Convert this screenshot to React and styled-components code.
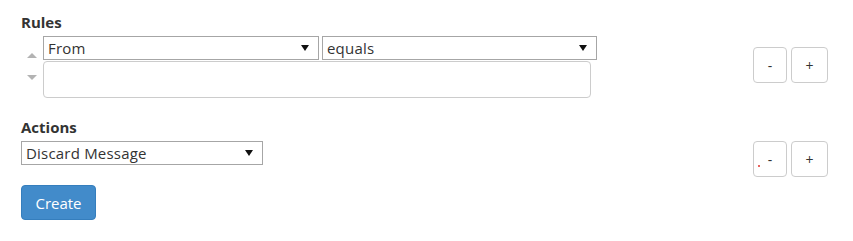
import React from "react";
import styled, { createGlobalStyle } from "styled-components";

const GlobalStyle = createGlobalStyle`
  body {
    margin: 0;
    background: #ffffff;
    font-family: "Open Sans", "Liberation Sans", sans-serif;
    color: #333333;
  }
`;

const arrow =
  "url(\"data:image/svg+xml;utf8,<svg xmlns='http://www.w3.org/2000/svg' width='8' height='6'><path d='M0 0h8L4 6z' fill='%23111'/></svg>\")";

const Page = styled.div`
  padding: 12px 25px 20px 21px;
  width: 807px;
`;

const Label = styled.div`
  font-size: 15px;
  font-weight: 700;
  line-height: 20px;
  margin-bottom: ${(p) => p.gap}px;
`;

const Row = styled.div`
  display: flex;
  align-items: flex-start;
`;

const Sorter = styled.div`
  box-sizing: border-box;
  width: 22px;
  align-self: stretch;
  display: flex;
  flex-direction: column;
  justify-content: center;
  align-items: center;
  gap: 17px;
  padding-bottom: 1px;
`;

const Tri = styled.span`
  width: 0;
  height: 0;
  border-left: 5px solid transparent;
  border-right: 5px solid transparent;
  ${(p) =>
    p.up ? "border-bottom: 5px solid #b3b3b3;" : "border-top: 5px solid #b3b3b3;"}
`;

const Fields = styled.div`
  display: flex;
  flex-direction: column;
  gap: 1px;
`;

const Selects = styled.div`
  display: flex;
  gap: 3px;
`;

const Select = styled.select`
  appearance: none;
  -webkit-appearance: none;
  box-sizing: border-box;
  width: ${(p) => p.w}px;
  height: 24px;
  margin: 0;
  padding: 0 20px 0 4px;
  border: 1px solid #a6a6a6;
  border-radius: 0;
  background: #ffffff ${arrow} no-repeat right 9px center;
  font-family: "Open Sans", "Liberation Sans", sans-serif;
  font-size: 15px;
  letter-spacing: 0.2px;
  color: #333333;
  outline: none;
`;

const TextArea = styled.textarea`
  box-sizing: border-box;
  display: block;
  width: 548px;
  height: 37px;
  margin: 0;
  border: 1px solid #cccccc;
  border-radius: 4px;
  resize: none;
  font-family: "Open Sans", "Liberation Sans", sans-serif;
  font-size: 15px;
  outline: none;
`;

const Spacer = styled.div`
  flex: 1;
`;

const Buttons = styled.div`
  display: flex;
  gap: 4px;
  margin-top: ${(p) => p.offset || 0}px;
`;

const SmallButton = styled.button`
  position: relative;
  box-sizing: border-box;
  width: ${(p) => p.w}px;
  height: 36px;
  padding: 0;
  border: 1px solid #cccccc;
  border-radius: 4px;
  background: #ffffff;
  font-family: "Open Sans", "Liberation Sans", sans-serif;
  font-size: 14px;
  color: #333333;
  cursor: pointer;
`;

const Dot = styled.span`
  position: absolute;
  left: 4px;
  top: 23px;
  width: 2px;
  height: 2px;
  border-radius: 1px;
  background: #e0302a;
`;

const Section = styled.div`
  margin-top: ${(p) => p.top || 0}px;
`;

const Create = styled.button`
  box-sizing: border-box;
  width: 75px;
  height: 35px;
  margin-top: 8px;
  border: 1px solid #357ebd;
  border-radius: 4px;
  background: #428bca;
  color: #ffffff;
  font-family: "Open Sans", "Liberation Sans", sans-serif;
  font-size: 15px;
  cursor: pointer;
`;

export default function App() {
  return (
    <Page>
      <GlobalStyle />
      <Section>
        <Label gap={4}>Rules</Label>
        <Row>
          <Sorter>
            <Tri up />
            <Tri />
          </Sorter>
          <Fields>
            <Selects>
              <Select w={276} defaultValue="from">
                <option value="from">From</option>
                <option value="to">To</option>
                <option value="subject">Subject</option>
              </Select>
              <Select w={275} defaultValue="equals">
                <option value="equals">equals</option>
                <option value="contains">contains</option>
              </Select>
            </Selects>
            <TextArea />
          </Fields>
          <Spacer />
          <Buttons offset={11}>
            <SmallButton w={34}>-</SmallButton>
            <SmallButton w={37}>+</SmallButton>
          </Buttons>
        </Row>
      </Section>
      <Section top={19}>
        <Label gap={4}>Actions</Label>
        <Row>
          <Select w={242} defaultValue="discard">
            <option value="discard">Discard Message</option>
            <option value="move">Move to Folder</option>
          </Select>
          <Spacer />
          <Buttons>
            <SmallButton w={34}>
              <Dot />-
            </SmallButton>
            <SmallButton w={37}>+</SmallButton>
          </Buttons>
        </Row>
      </Section>
      <Create>Create</Create>
    </Page>
  );
}
